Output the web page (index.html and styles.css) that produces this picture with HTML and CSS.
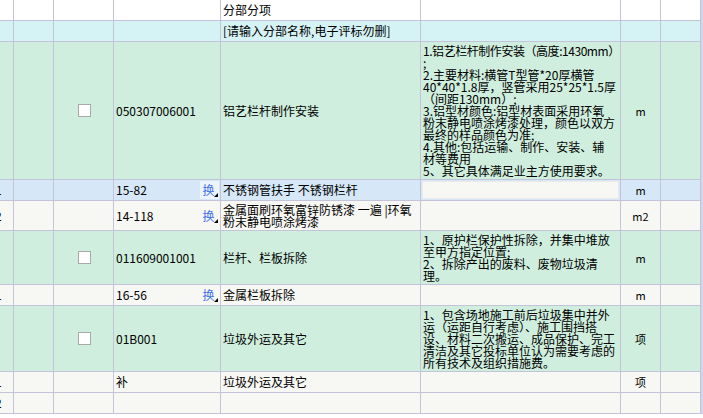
FILE: index.html
```html
<!DOCTYPE html>
<html lang="zh-CN">
<head>
<meta charset="utf-8">
<title>分部分项</title>
<link rel="stylesheet" href="styles.css">
</head>
<body>
<div class="wrap">
  <div class="grid">
    <div class="row white h20">
      <div class="c"></div><div class="c"></div><div class="c"></div><div class="c"></div>
      <div class="c name">分部分项</div><div class="c"></div><div class="c"></div><div class="c"></div>
    </div>
    <div class="row cyan h20">
      <div class="c"></div><div class="c"></div><div class="c"></div><div class="c"></div>
      <div class="c name">[请输入分部名称,电子评标勿删]</div><div class="c"></div><div class="c"></div><div class="c"></div>
    </div>
    <div class="row green h137">
      <div class="c"></div><div class="c"></div>
      <div class="c chk"><span class="box"></span></div>
      <div class="c code">050307006001</div>
      <div class="c name">铝艺栏杆制作安装</div>
      <div class="c feat">
        <span class="tight">1.铝艺栏杆制作安装（高度:1430mm）</span>
        <span>;</span>
        <span>2.主要材料:横管T型管*20厚横管</span>
        <span>40*40*1.8厚，竖管采用25*25*1.5厚</span>
        <span>（间距130mm）;</span>
        <span>3.铝型材颜色:铝型材表面采用环氧</span>
        <span>粉末静电喷涂烤漆处理，颜色以双方</span>
        <span>最终的样品颜色为准;</span>
        <span>4.其他:包括运输、制作、安装、辅</span>
        <span>材等费用</span>
        <span>5、其它具体满足业主方使用要求。</span>
      </div>
      <div class="c unit">m</div>
      <div class="c"></div>
    </div>
    <div class="row sel h20">
      <div class="c num"><span>1</span></div><div class="c"></div><div class="c"></div>
      <div class="c code">15-82<span class="swap hl">换<i></i></span></div>
      <div class="c name">不锈钢管扶手 不锈钢栏杆</div>
      <div class="c edit"><span class="input"></span></div>
      <div class="c unit">m</div>
      <div class="c"></div>
    </div>
    <div class="row off h29">
      <div class="c num"><span>2</span></div><div class="c"></div><div class="c"></div>
      <div class="c code">14-118<span class="swap">换<i></i></span></div>
      <div class="c name multi"><span>金属面刷环氧富锌防锈漆 一遍 |环氧</span><span>粉末静电喷涂烤漆</span></div>
      <div class="c"></div>
      <div class="c unit">m2</div>
      <div class="c"></div>
    </div>
    <div class="row green h53">
      <div class="c"></div><div class="c"></div>
      <div class="c chk"><span class="box"></span></div>
      <div class="c code">011609001001</div>
      <div class="c name">栏杆、栏板拆除</div>
      <div class="c feat">
        <span>1、原护栏保护性拆除，并集中堆放</span>
        <span>至甲方指定位置;</span>
        <span>2、拆除产出的废料、废物垃圾清</span>
        <span>理。</span>
      </div>
      <div class="c unit">m</div>
      <div class="c"></div>
    </div>
    <div class="row off h20">
      <div class="c num"><span>1</span></div><div class="c"></div><div class="c"></div>
      <div class="c code">16-56<span class="swap">换<i></i></span></div>
      <div class="c name">金属栏板拆除</div>
      <div class="c"></div>
      <div class="c unit">m</div>
      <div class="c"></div>
    </div>
    <div class="row green h65">
      <div class="c"></div><div class="c"></div>
      <div class="c chk"><span class="box"></span></div>
      <div class="c code">01B001</div>
      <div class="c name">垃圾外运及其它</div>
      <div class="c feat">
        <span>1、包含场地施工前后垃圾集中并外</span>
        <span>运（运距自行考虑）、施工围挡搭</span>
        <span>设、材料二次搬运、成品保护、完工</span>
        <span>清洁及其它投标单位认为需要考虑的</span>
        <span>所有技术及组织措施费。</span>
      </div>
      <div class="c unit">项</div>
      <div class="c"></div>
    </div>
    <div class="row off h20">
      <div class="c num"><span>1</span></div><div class="c"></div><div class="c"></div>
      <div class="c code">补</div>
      <div class="c name">垃圾外运及其它</div>
      <div class="c"></div>
      <div class="c unit">项</div>
      <div class="c"></div>
    </div>
    <div class="row off h20">
      <div class="c num"><span>2</span></div><div class="c"></div><div class="c"></div>
      <div class="c"></div><div class="c"></div><div class="c"></div><div class="c"></div><div class="c"></div>
    </div>
  </div>
  <div class="strip"></div>
</div>
</body>
</html>
```

FILE: styles.css
```css
html, body {
  margin: 0;
  padding: 0;
  background: #ffffff;
}
body {
  width: 703px;
  height: 418px;
  overflow: hidden;
  font-family: "Noto Sans CJK SC", "Noto Sans", sans-serif;
  font-size: 12px;
  color: #000;
}
.wrap {
  display: flex;
  align-items: flex-start;
}
.grid {
  display: flex;
  flex-direction: column;
  gap: 1px;
  background: #c3c3d9;
  padding: 0 1px 1px 0;
}
.strip {
  width: 2px;
  height: 414px;
  background: #d3d3ea;
}
.row {
  display: grid;
  grid-template-columns: 13px 39px 59px 106px 199px 199px 39px 39px;
  column-gap: 1px;
}
.h20 { height: 20px; }
.h29 { height: 29px; }
.h53 { height: 53px; }
.h65 { height: 65px; }
.h137 { height: 137px; }

.white .c { background: #ffffff; }
.cyan .c { background: #d5f2f5; }
.green .c { background: #cfeedd; }
.sel .c { background: #d6e8f8; }
.off .c { background: #f7f7f3; }

.c {
  display: flex;
  align-items: center;
  overflow: hidden;
  white-space: nowrap;
  line-height: 12px;
  position: relative;
}
.num span {
  margin-left: -5px;
}
.chk {
  justify-content: center;
}
.box {
  width: 11px;
  height: 11px;
  background: #ffffff;
  border: 1px solid #a9a9a9;
  margin-left: 1px;
}
.code {
  padding-left: 2px;
}
.name {
  padding-left: 2px;
}
.multi, .feat {
  flex-direction: column;
  align-items: flex-start;
  justify-content: center;
}
.feat {
  padding-left: 2px;
}
.tight {
  letter-spacing: -0.45px;
}
.unit {
  justify-content: center;
  font-size: 11px;
}
.swap {
  margin-left: auto;
  width: 19px;
  height: 18px;
  margin-right: 1px;
  display: flex;
  align-items: center;
  justify-content: center;
  color: #3f72ea;
  position: relative;
  padding-right: 2px;
  box-sizing: border-box;
}
.swap.hl {
  background: #edf4fc;
}
.swap i {
  position: absolute;
  right: 1px;
  bottom: 2px;
  width: 0;
  height: 0;
  border-left: 4px solid transparent;
  border-bottom: 4px solid #000000;
}
.edit {
  padding: 1px;
}
.input {
  display: block;
  width: 100%;
  height: 18px;
  background: #f7f7f3;
  box-sizing: border-box;
  border: 1px solid #eaeaea;
}
```
